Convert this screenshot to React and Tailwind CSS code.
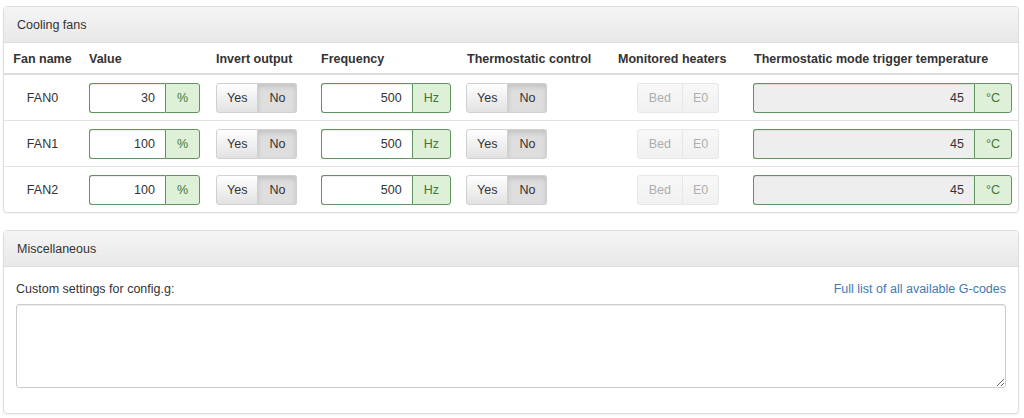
const fans = [
  { name: "FAN0", value: 30, freq: 500, temp: 45 },
  { name: "FAN1", value: 100, freq: 500, temp: 45 },
  { name: "FAN2", value: 100, freq: 500, temp: 45 },
];

const InputGroup = ({ value, unit, readOnly }) => (
  <div className="flex h-[30px] w-full">
    <div
      className={`flex-1 flex items-center justify-end pr-[10px] border border-r-0 border-[#5f9460] rounded-l-[3px] shadow-[inset_0_1px_1px_rgba(0,0,0,0.075)] ${
        readOnly ? "bg-[#eeeeee]" : "bg-white"
      }`}
    >
      {value}
    </div>
    <div className="flex items-center px-[11px] border border-[#5f9460] rounded-r-[3px] bg-[#dff0d8] text-[#3c763d]">
      {unit}
    </div>
  </div>
);

const Toggle = ({ left, right, disabled }) =>
  disabled ? (
    <div className="inline-flex h-[30px] opacity-60">
      <span className="flex items-center px-[11px] border border-[#d8d8d8] rounded-l-[3px] bg-gradient-to-b from-[#f4f4f4] to-[#e8e8e8] text-[#777]">
        {left}
      </span>
      <span className="flex items-center px-[10px] border border-l-0 border-[#d8d8d8] rounded-r-[3px] bg-gradient-to-b from-[#f4f4f4] to-[#e8e8e8] text-[#777]">
        {right}
      </span>
    </div>
  ) : (
    <div className="inline-flex h-[30px]">
      <span className="flex items-center px-[10px] border border-[#d0d0d0] rounded-l-[3px] bg-gradient-to-b from-white to-[#e2e2e2] text-[#333]">
        {left}
      </span>
      <span className="flex items-center px-[11px] border border-l-0 border-[#d0d0d0] rounded-r-[3px] bg-[#dedede] shadow-[inset_0_3px_5px_rgba(0,0,0,0.125)] text-[#333]">
        {right}
      </span>
    </div>
  );

const Panel = ({ title, children }) => (
  <div className="border border-[#dddddd] rounded-[4px] bg-white shadow-[0_1px_2px_rgba(0,0,0,0.05)] overflow-hidden">
    <div className="h-[36px] flex items-center px-[13px] pt-[1px] bg-gradient-to-b from-[#f5f5f5] to-[#e8e8e8] border-b border-[#dddddd] text-[#333]">
      {title}
    </div>
    {children}
  </div>
);

export default function App() {
  return (
    <div
      className="bg-white w-[1024px] h-[418px] pt-[6px] pl-[3px] pr-[5px] text-[12.5px] leading-[17px] text-[#333]"
      style={{ fontFamily: '"Liberation Sans", Arial, sans-serif' }}
    >
      {/* COOLING FANS */}
      <Panel title="Cooling fans">
        <table className="w-full table-fixed border-collapse">
          <colgroup>
            <col className="w-[77px]" />
            <col className="w-[127px]" />
            <col className="w-[105px]" />
            <col className="w-[146px]" />
            <col className="w-[151px]" />
            <col className="w-[136px]" />
            <col />
          </colgroup>
          <thead>
            <tr className="border-b-2 border-[#dddddd]">
              <th className="h-[31px] px-[8px] pt-[2px] text-center font-bold">Fan name</th>
              <th className="h-[31px] px-[8px] pt-[2px] text-left font-bold">Value</th>
              <th className="h-[31px] px-[8px] pt-[2px] text-left font-bold">Invert output</th>
              <th className="h-[31px] px-[8px] pt-[2px] text-left font-bold">Frequency</th>
              <th className="h-[31px] px-[8px] pt-[2px] text-left font-bold">Thermostatic control</th>
              <th className="h-[31px] px-[8px] pt-[2px] text-left font-bold whitespace-nowrap">Monitored heaters</th>
              <th className="h-[31px] px-[8px] pt-[2px] text-left font-bold whitespace-nowrap">Thermostatic mode trigger temperature</th>
            </tr>
          </thead>
          <tbody>
            {fans.map((fan, idx) => (
              <tr key={fan.name} className={idx > 0 ? "border-t border-[#e3e3e3]" : ""}>
                <td className="pt-[8px] pb-[7px] px-[8px] text-center">{fan.name}</td>
                <td className="pt-[8px] pb-[7px] px-[8px]">
                  <InputGroup value={fan.value} unit="%" />
                </td>
                <td className="pt-[8px] pb-[7px] px-[8px]">
                  <Toggle left="Yes" right="No" />
                </td>
                <td className="pt-[8px] pb-[7px] px-[8px]">
                  <InputGroup value={fan.freq} unit="Hz" />
                </td>
                <td className="pt-[8px] pb-[7px] px-[7px]">
                  <Toggle left="Yes" right="No" />
                </td>
                <td className="pt-[8px] pb-[7px] px-[8px] text-center">
                  <Toggle left="Bed" right="E0" disabled />
                </td>
                <td className="pt-[8px] pb-[7px] pl-[7px] pr-[6px]">
                  <InputGroup value={fan.temp} unit="°C" readOnly />
                </td>
              </tr>
            ))}
          </tbody>
        </table>
      </Panel>

      <div className="h-[17px]" />

      {/* MISCELLANEOUS */}
      <Panel title="Miscellaneous">
        <div className="px-[12px] pt-[14px] pb-[25px]">
          <div className="flex justify-between items-center">
            <span>Custom settings for config.g:</span>
            <a href="#" className="text-[#3f7ab5]">
              Full list of all available G-codes
            </a>
          </div>
          <textarea className="mt-[6px] block w-full h-[84px] border border-[#cccccc] rounded-[3px] shadow-[inset_0_1px_1px_rgba(0,0,0,0.075)] resize-y" />
        </div>
      </Panel>
    </div>
  );
}
